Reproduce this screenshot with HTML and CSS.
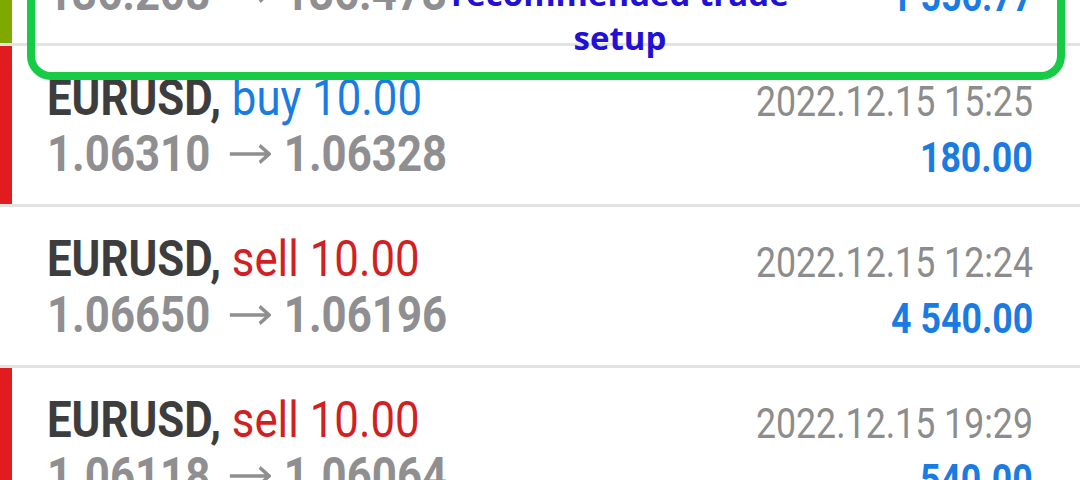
FILE: index.html
```html
<!DOCTYPE html>
<html lang="en">
<head>
    <meta charset="UTF-8">
    <meta name="viewport" content="width=device-width, initial-scale=1.0">
    <title>Trade History</title>
    <link rel="stylesheet" href="styles.css">
</head>
<body>

    <div class="screen">
        <div class="history">
            <div class="deal">
                <div class="bar bar-olive"></div>
                <div class="info">
                    <div class="line"><span class="fit"><b class="symbol">USDJPY,</b> <span class="buy">buy 10.00</span></span></div>
                    <div class="line prices"><span class="fit">136.208<svg class="arrow" viewBox="0 0 48 20"><path d="M1 10H46M35 1.5L46 10L35 18.5"/></svg>136.473</span></div>
                </div>
                <div class="result">
                    <div class="line date"><span class="fit">2022.12.15 10:41</span></div>
                    <div class="line profit"><span class="fit">1 556.77</span></div>
                </div>
            </div>

            <div class="deal">
                <div class="bar bar-red"></div>
                <div class="info">
                    <div class="line"><span class="fit"><b class="symbol">EURUSD,</b> <span class="buy">buy 10.00</span></span></div>
                    <div class="line prices"><span class="fit">1.06310<svg class="arrow" viewBox="0 0 48 20"><path d="M1 10H46M35 1.5L46 10L35 18.5"/></svg>1.06328</span></div>
                </div>
                <div class="result">
                    <div class="line date"><span class="fit">2022.12.15 15:25</span></div>
                    <div class="line profit"><span class="fit">180.00</span></div>
                </div>
            </div>

            <div class="deal">
                <div class="bar"></div>
                <div class="info">
                    <div class="line"><span class="fit"><b class="symbol">EURUSD,</b> <span class="sell">sell 10.00</span></span></div>
                    <div class="line prices"><span class="fit">1.06650<svg class="arrow" viewBox="0 0 48 20"><path d="M1 10H46M35 1.5L46 10L35 18.5"/></svg>1.06196</span></div>
                </div>
                <div class="result">
                    <div class="line date"><span class="fit">2022.12.15 12:24</span></div>
                    <div class="line profit"><span class="fit">4 540.00</span></div>
                </div>
            </div>

            <div class="deal">
                <div class="bar bar-red"></div>
                <div class="info">
                    <div class="line"><span class="fit"><b class="symbol">EURUSD,</b> <span class="sell">sell 10.00</span></span></div>
                    <div class="line prices"><span class="fit">1.06118<svg class="arrow" viewBox="0 0 48 20"><path d="M1 10H46M35 1.5L46 10L35 18.5"/></svg>1.06064</span></div>
                </div>
                <div class="result">
                    <div class="line date"><span class="fit">2022.12.15 19:29</span></div>
                    <div class="line profit"><span class="fit">540.00</span></div>
                </div>
            </div>
        </div>

        <div class="callout">
            <div class="callout-text">recommended trade<br>setup</div>
        </div>
    </div>

</body>
</html>
```

FILE: styles.css
```css
body {
    margin: 0;
    padding: 0;
    background: #fff;
    font-family: Roboto, "Liberation Sans", sans-serif;
    overflow: hidden;
}
.screen {
    position: relative;
    width: 1080px;
    height: 480px;
    overflow: hidden;
}
.history {
    margin-top: -115px;
}
.deal {
    display: flex;
    height: 158px;
    border-bottom: 3px solid #e3e3e3;
}
.bar {
    width: 12px;
    flex: none;
}
.bar-olive {
    background: #7fa800;
}
.bar-red {
    background: #e01c1f;
}
.info {
    flex: 1;
    padding: 24px 0 0 35px;
}
.result {
    flex: 1;
    padding: 28px 47px 0 0;
    text-align: right;
}
.line {
    font-size: 42px;
    line-height: 56px;
    white-space: nowrap;
}
.info .line {
    font-size: 50px;
}
.fit {
    display: inline-block;
    transform: scaleX(0.85);
    transform-origin: left center;
}
.info .fit {
    transform: scaleX(0.875);
}
.result .fit {
    transform-origin: right center;
}
.symbol {
    color: #3d3d3d;
    font-weight: bold;
}
.buy {
    color: #1a7ce0;
}
.sell {
    color: #d21f24;
}
.prices {
    color: #8f8f91;
    font-weight: bold;
}
.arrow {
    width: 48px;
    height: 20px;
    margin: 0 15px 0 21px;
    vertical-align: 7px;
    fill: none;
    stroke: currentColor;
    stroke-width: 3.5;
}
.date {
    color: #8c8c8c;
}
.profit {
    color: #1a7be2;
    font-weight: bold;
}
.callout {
    position: absolute;
    left: 27px;
    right: 15px;
    top: -100px;
    height: 164px;
    border: 8px solid #17cb47;
    border-radius: 24px;
    display: flex;
    flex-direction: column;
    justify-content: flex-end;
}
.callout-text {
    padding: 0 0 12px 148px;
    text-align: center;
    font-family: "Open Sans", sans-serif;
    font-weight: bold;
    font-size: 33px;
    line-height: 44px;
    color: #2210d4;
}
```
